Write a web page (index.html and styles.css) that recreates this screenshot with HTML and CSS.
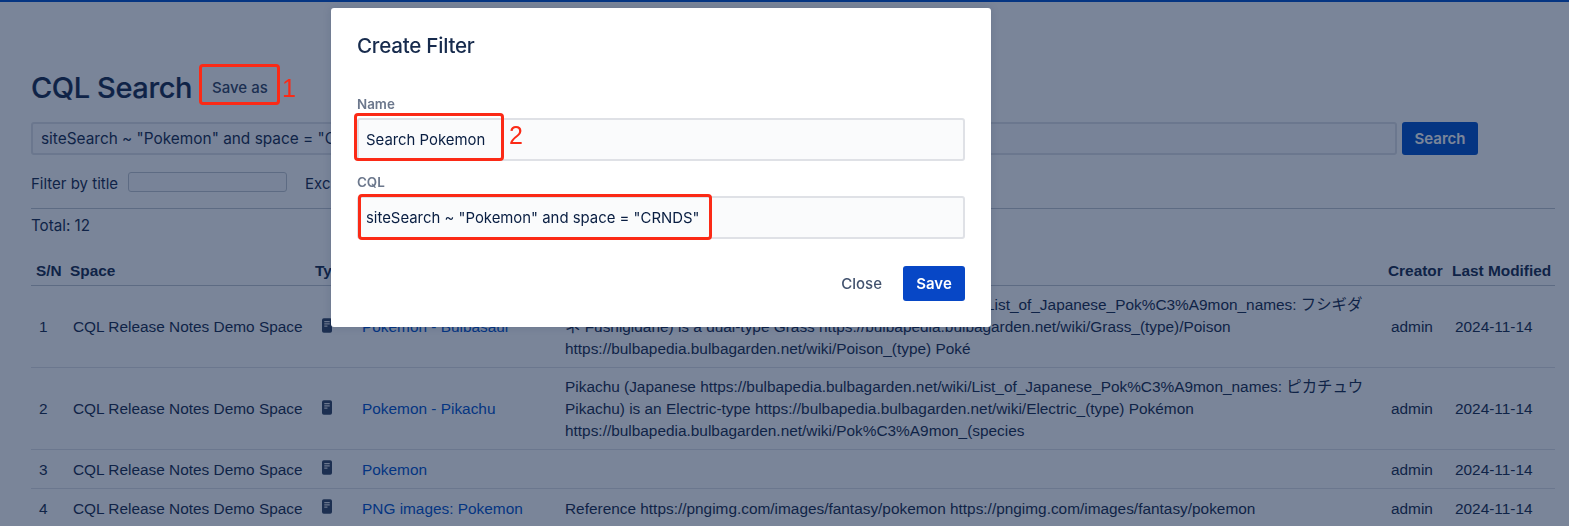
FILE: index.html
```html
<!DOCTYPE html>
<html lang="en">
<head>
<meta charset="utf-8">
<title>CQL Search</title>
<link rel="stylesheet" href="styles.css">
</head>
<body>
<div class="page">
  <header class="title-row">
    <h1 class="title">CQL Search</h1>
    <button class="btn-subtle">Save as</button>
  </header>
  <div class="search-row">
    <div class="search-input">siteSearch ~ "Pokemon" and space = "CRNDS"</div>
    <button class="btn-search">Search</button>
  </div>
  <div class="filter-row">
    <span>Filter by title</span>
    <div class="filter-input"></div>
    <span class="exclude">Exclude</span>
  </div>
  <div class="total">Total: 12</div>
  <table class="results">
    <colgroup>
      <col class="c-sn"><col class="c-space"><col class="c-type"><col class="c-title"><col class="c-excerpt"><col class="c-creator"><col class="c-date">
    </colgroup>
    <thead>
      <tr><th>S/N</th><th>Space</th><th>Type</th><th>Title</th><th>Excerpt</th><th>Creator</th><th>Last Modified</th></tr>
    </thead>
    <tbody>
      <tr>
        <td>1</td><td>CQL Release Notes Demo Space</td>
        <td><svg class="doc" viewBox="0 0 11 16"><path fill="#344563" d="M2 0h7a2 2 0 0 1 2 2v12a2 2 0 0 1-2 2H2a2 2 0 0 1-2-2V2a2 2 0 0 1 2-2z"/><path fill="#dfe1e6" d="M2.500 3h6v1.300h-6zM2.500 5.500h6v1.300h-6zM2.500 8h3.500v1.300H2.500z"/></svg></td>
        <td><a class="link">Pokemon - Bulbasaur</a></td>
        <td class="excerpt">Bulbasaur (Japanese https://bulbapedia.bulbagarden.net/wiki/List_of_Japanese_Pok%C3%A9mon_names: フシギダ<br>ネ Fushigidane) is a dual-type Grass https://bulbapedia.bulbagarden.net/wiki/Grass_(type)/Poison https://bulbapedia.bulbagarden.net/wiki/Poison_(type) Poké</td>
        <td>admin</td><td>2024-11-14</td>
      </tr>
      <tr>
        <td>2</td><td>CQL Release Notes Demo Space</td>
        <td><svg class="doc" viewBox="0 0 11 16"><path fill="#344563" d="M2 0h7a2 2 0 0 1 2 2v12a2 2 0 0 1-2 2H2a2 2 0 0 1-2-2V2a2 2 0 0 1 2-2z"/><path fill="#dfe1e6" d="M2.500 3h6v1.300h-6zM2.500 5.500h6v1.300h-6zM2.500 8h3.500v1.300H2.500z"/></svg></td>
        <td><a class="link">Pokemon - Pikachu</a></td>
        <td class="excerpt">Pikachu (Japanese https://bulbapedia.bulbagarden.net/wiki/List_of_Japanese_Pok%C3%A9mon_names: ピカチュウ Pikachu) is an Electric-type https://bulbapedia.bulbagarden.net/wiki/Electric_(type) Pokémon https://bulbapedia.bulbagarden.net/wiki/Pok%C3%A9mon_(species</td>
        <td>admin</td><td>2024-11-14</td>
      </tr>
      <tr class="row-short">
        <td>3</td><td>CQL Release Notes Demo Space</td>
        <td><svg class="doc" viewBox="0 0 11 16"><path fill="#344563" d="M2 0h7a2 2 0 0 1 2 2v12a2 2 0 0 1-2 2H2a2 2 0 0 1-2-2V2a2 2 0 0 1 2-2z"/><path fill="#dfe1e6" d="M2.500 3h6v1.300h-6zM2.500 5.500h6v1.300h-6zM2.500 8h3.500v1.300H2.500z"/></svg></td>
        <td><a class="link">Pokemon</a></td>
        <td class="excerpt"></td>
        <td>admin</td><td>2024-11-14</td>
      </tr>
      <tr class="row-short">
        <td>4</td><td>CQL Release Notes Demo Space</td>
        <td><svg class="doc" viewBox="0 0 11 16"><path fill="#344563" d="M2 0h7a2 2 0 0 1 2 2v12a2 2 0 0 1-2 2H2a2 2 0 0 1-2-2V2a2 2 0 0 1 2-2z"/><path fill="#dfe1e6" d="M2.500 3h6v1.300h-6zM2.500 5.500h6v1.300h-6zM2.500 8h3.500v1.300H2.500z"/></svg></td>
        <td><a class="link">PNG images: Pokemon</a></td>
        <td class="excerpt">Reference https://pngimg.com/images/fantasy/pokemon https://pngimg.com/images/fantasy/pokemon</td>
        <td>admin</td><td>2024-11-14</td>
      </tr>
    </tbody>
  </table>
</div>

<div class="blanket"></div>

<section class="modal">
  <h2 class="modal-title">Create Filter</h2>
  <label class="field-label field-name">Name</label>
  <div class="field-input">Search Pokemon</div>
  <label class="field-label field-cql">CQL</label>
  <div class="field-input">siteSearch ~ "Pokemon" and space = "CRNDS"</div>
  <footer class="modal-footer">
    <button class="btn-close">Close</button>
    <button class="btn-save">Save</button>
  </footer>
</section>

<div class="mark mark-saveas"></div>
<div class="mark-num num-1">1</div>
<div class="mark mark-name"></div>
<div class="mark-num num-2">2</div>
<div class="mark mark-cql"></div>
</body>
</html>
```
FILE: styles.css
```css
* { box-sizing: border-box; }
html, body { margin: 0; height: 100%; overflow: hidden; }
body {
  background: #fff;
  color: #172b4d;
  font-family: "Liberation Sans", "Noto Sans CJK JP", Arial, sans-serif;
  font-size: 15.4px;
  border-top: 2px solid #0052cc;
}
button { font: inherit; border: 0; cursor: pointer; }

.page { padding: 0 14px 0 31px; }

.title-row { display: flex; align-items: center; gap: 8px; padding-top: 67px; height: 103px; }
.title { margin: 0; font: 500 29px/41px Inter, "Liberation Sans", sans-serif; letter-spacing: -0.4px; color: #172b4d; -webkit-text-stroke: 0.2px #172b4d; }
.btn-subtle {
  background: transparent; color: #344563; padding: 0 12px; height: 32px;
  font: 500 15px Inter, sans-serif;
}

.search-row { display: flex; gap: 5px; margin-top: 17px; }
.search-input {
  width: 1366px; height: 33px; border: 2px solid #dfe1e6; border-radius: 3px; background: #fafbfc;
  padding: 0 8px; font: 15.400px/29px Inter, sans-serif; color: #172b4d;
}
.btn-search {
  width: 76px; height: 33px; border-radius: 3px; background: #0052cc; color: #fff;
  font: 600 15px Inter, sans-serif;
}

.filter-row { display: flex; align-items: center; margin-top: 17px; height: 20px; font: 15px Inter, sans-serif; }
.filter-row span { position: relative; top: 1px; }
.filter-input { width: 159px; height: 20px; margin-left: 10px; border: 1px solid #c1c7d0; border-radius: 3px; background: #fafbfc; }
.exclude { margin-left: 18px; }

.total {
  margin-top: 16px; border-top: 1px solid #c1c7d0; padding-top: 7px;
  font: 15.200px/19px Inter, sans-serif; height: 54px;
}

.results { width: 1524px; table-layout: fixed; border-collapse: collapse; }
.c-sn { width: 34px; } .c-space { width: 245px; } .c-type { width: 44px; } .c-title { width: 203px; }
.c-excerpt { width: 826px; } .c-creator { width: 64px; } .c-date { width: 108px; }
.results th {
  text-align: left; font-weight: 700; padding: 0 0 5px 5px; height: 23px; white-space: nowrap;
  border-bottom: 1px solid #c1c7d0; line-height: 18px; overflow: visible;
}
.results td { padding: 8px 8px 7px; line-height: 22px; border-bottom: 1px solid #dfe1e6; vertical-align: middle; white-space: nowrap; }
.results td.excerpt { white-space: normal; padding-right: 10px; }
.row-short td { height: 39px; }
.doc { display: block; width: 10px; height: 15px; margin: -4px 0 0 4px; }
.link { color: #0052cc; }

.blanket { position: fixed; inset: 0; background: rgba(9, 30, 66, 0.54); }

.modal {
  position: fixed; left: 331px; top: 8px; width: 660px; height: 319px;
  background: #fff; border-radius: 3px; padding: 23px 26px 0 26px;
  box-shadow: 0 0 8px rgba(9, 30, 66, 0.15);
}
.modal-title { margin: 0; font: 500 20.600px/30px Inter, sans-serif; letter-spacing: -0.25px; color: #172b4d; }
.field-label { display: block; font: 600 13.400px/16px Inter, sans-serif; color: #6b778c; }
.field-name { margin-top: 35px; }
.field-cql { margin-top: 13px; }
.field-input {
  height: 43px; margin-top: 6px; border: 2px solid #dfe1e6; border-radius: 3px; background: #fafbfc;
  padding: 0 7px; font: 14.900px/40px Inter, sans-serif; color: #091e42;
}
.modal-footer { display: flex; justify-content: flex-end; align-items: center; gap: 8px; margin-top: 27px; }
.btn-close { background: transparent; color: #42526e; padding: 0 13px; height: 35px; font: 500 15px Inter, sans-serif; }
.btn-save { width: 62px; height: 35px; border-radius: 3px; background: #0747c6; color: #fff; font: 600 15px Inter, sans-serif; }

.mark { position: fixed; border: 3px solid #fb2a16; border-radius: 4px; }
.mark-saveas { left: 199px; top: 64px; width: 81px; height: 41px; }
.mark-name { left: 354px; top: 113px; width: 150px; height: 48px; }
.mark-cql { left: 358px; top: 194px; width: 354px; height: 46px; }
.mark-num { position: fixed; color: #fb2a16; font: 25px/30px "Liberation Sans", sans-serif; }
.num-1 { left: 282px; top: 73px; }
.num-2 { left: 509px; top: 120px; }
```
